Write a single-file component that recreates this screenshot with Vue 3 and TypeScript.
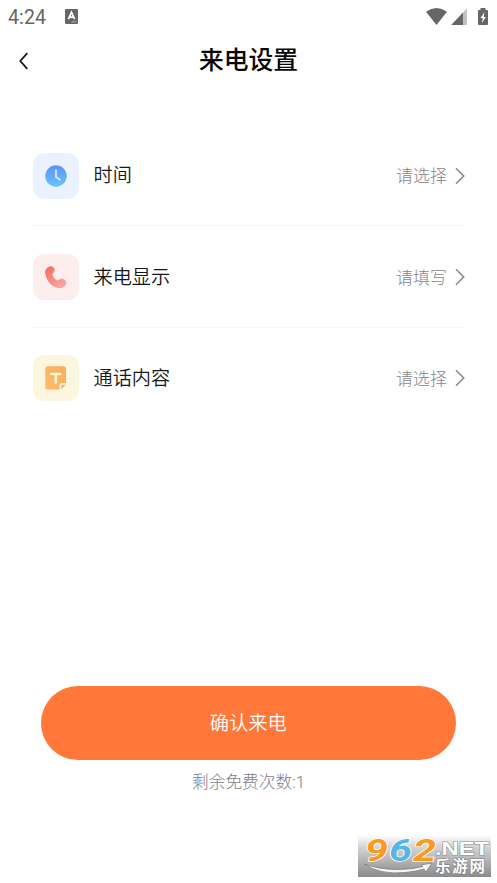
<script setup lang="ts">
type IconName = 'clock' | 'phone' | 'text'

interface SettingRow {
  icon: IconName
  label: string
  hint: string
}

const rows: SettingRow[] = [
  { icon: 'clock', label: '时间', hint: '请选择' },
  { icon: 'phone', label: '来电显示', hint: '请填写' },
  { icon: 'text', label: '通话内容', hint: '请选择' },
]
const remaining = 1
</script>

<template>
  <main class="screen">
    <div class="status">
      <span class="time">4:24</span>
      <svg class="app-icon" width="13" height="15" viewBox="0 0 13 15">
        <rect width="13" height="15" rx="1.3" fill="#666" />
        <path d="M3.4 10.2 6.5 3.4l3.1 6.8M4.5 8.2h4" fill="none" stroke="#fff" stroke-width="1.7" />
        <path d="M6.5 12.8h5" stroke="#aaa" stroke-width="1.2" />
      </svg>
      <svg class="signals" width="64" height="20" viewBox="0 0 64 20">
        <path d="M0 3.8Q10.5-3.6 21 3.8L10.5 17Z" fill="#666" />
        <path d="M37 4.2 41 .8V17h-4Z" fill="#c2c2c2" />
        <path d="M25.2 17 37 4.4V17Z" fill="#666" />
        <path d="M54.5 0h5v2H61q1 0 1 1v13q0 1-1 1h-8q-1 0-1-1V3q0-1 1-1h1.500Z" fill="#666" />
        <path d="m58.500 4-4 6h2.200l-.8 5 4-6h-2.200Z" fill="#fff" />
      </svg>
    </div>
    <header class="header">
      <svg class="back" width="10" height="18" viewBox="0 0 10 18">
        <path d="M8.300 1.200 1.300 9l7 7.800" fill="none" stroke="#1c1c1c" stroke-width="1.800" />
      </svg>
      <h1>来电设置</h1>
    </header>

    <section class="list">
      <div v-for="row in rows" :key="row.label" class="row">
        <div class="tile" :class="row.icon">
          <svg v-if="row.icon === 'clock'" width="22" height="22" viewBox="0 0 22 22">
            <defs>
              <linearGradient id="clockFill" x1="0" y1="0" x2="0" y2="1">
                <stop stop-color="#5b92f4" /><stop offset="1" stop-color="#67c4fb" />
              </linearGradient>
            </defs>
            <circle cx="11" cy="11" r="10.700" fill="url(#clockFill)" />
            <path d="M11 5v7l4 2.800" fill="none" stroke="#dcecff" stroke-width="1.700" stroke-linecap="round" stroke-linejoin="round" />
          </svg>
          <svg v-else-if="row.icon === 'phone'" width="22" height="23" viewBox="0 0 22 23">
            <defs>
              <linearGradient id="phoneFill" x1="0" y1="0" x2=".7" y2="1">
                <stop stop-color="#f5685f" /><stop offset="1" stop-color="#f9a6a1" />
              </linearGradient>
            </defs>
            <path d="M1.800 2.200Q5.500-1.500 8.600 1.600 10.200 3.500 9.300 5.300L7.800 7.900Q7.200 9 8 10.200 9.300 12.700 11.800 14.200 12.900 14.800 13.700 14L15.300 12.900Q16.800 12.200 18.200 13L20.300 14.500Q22.200 16.300 20.800 18.800 18.500 22.500 14.500 22.200 7.300 21.600 2.900 14.700 0 10.200.1 6 .2 3.800 1.800 2.200Z" fill="url(#phoneFill)" />
          </svg>
          <svg v-else width="22" height="24" viewBox="0 0 22 24">
            <defs>
              <linearGradient id="noteFill" x1="1" y1="0" x2="0" y2="1">
                <stop stop-color="#faae58" /><stop offset="1" stop-color="#fbbd6b" />
              </linearGradient>
            </defs>
            <path d="M2.500.3h16.300q2.200 0 2.200 2.200V17h-4.500q-2 0-2 2v4.500h-12Q.3 23.500.3 21.300V2.500Q.3.300 2.500.3Z" fill="url(#noteFill)" />
            <path d="M16.300 23.200v-3.200q0-1.200 1.200-1.200H21Z" fill="#fbb761" />
            <path d="M6.300 8h9M10.800 8v8.500" fill="none" stroke="#fff3dc" stroke-width="2.600" stroke-linecap="round" />
          </svg>
        </div>
        <span class="label">{{ row.label }}</span>
        <span class="hint">{{ row.hint }}</span>
        <svg class="chevron" width="10" height="18" viewBox="0 0 10 18">
          <path d="M1 1.200 8.700 9 1 16.800" fill="none" stroke="#8b8b90" stroke-width="1.600" />
        </svg>
      </div>
    </section>

    <button class="confirm" type="button">确认来电</button>
    <p class="remaining">剩余免费次数:{{ remaining }}</p>

    <svg class="brand" width="133" height="42" viewBox="0 0 133 42">
      <defs>
        <linearGradient id="brandFade" x1="0" y1="0" x2="0" y2="1">
          <stop stop-color="#fff" /><stop offset=".25" stop-color="#d8d8d8" /><stop offset="1" stop-color="#8b8b8b" />
        </linearGradient>
      </defs>
      <rect width="133" height="42" fill="url(#brandFade)" />
      <g class="digits" stroke-linejoin="round">
        <text x="7" y="26" textLength="23" lengthAdjust="spacingAndGlyphs" fill="#fb9a20">9</text>
        <text x="31" y="26" textLength="23" lengthAdjust="spacingAndGlyphs" fill="#59b3e4">6</text>
        <text x="55" y="26" textLength="23" lengthAdjust="spacingAndGlyphs" fill="#fb9a20">2</text>
      </g>
      <text class="domain" x="77" y="19.500" textLength="54" lengthAdjust="spacingAndGlyphs">.NET</text>
      <path d="M6 29Q22 40 47 37.500 59 36.300 66 34l2 3 6-9-11 2 2 1.500Q54 34.500 40 34.500 21 34.500 6 29Z" fill="#f5f5f5" stroke="#777" stroke-width=".7" />
      <text class="site" x="77" y="37" textLength="50">乐游网</text>
    </svg>
  </main>
</template>

<style>
body {
  background: #fff;
}
</style>

<style scoped>
.screen {
  position: relative;
  box-sizing: border-box;
  width: 497px;
  height: 883px;
  overflow: hidden;
  background: #fff;
  font-family: Roboto, "Noto Sans CJK SC", sans-serif;
}
.status {
  box-sizing: border-box;
  display: flex;
  align-items: flex-start;
  height: 34px;
  padding: 8px 7px 0 8px;
  color: #666;
}
.time {
  width: 57px;
  font-size: 19.5px;
  line-height: 20px;
  letter-spacing: 0.1px;
}
.app-icon {
  margin-top: 1px;
}
.signals {
  margin-left: auto;
}
.header {
  display: grid;
  grid-template-columns: 60px 1fr 60px;
  align-items: center;
  height: 52px;
}
.back {
  margin: 2px 0 0 18.5px;
}
h1 {
  margin: 0;
  padding-top: 2px;
  font-size: 24.8px;
  line-height: 36px;
  font-weight: 500;
  text-align: center;
  color: #080808;
}
.list {
  padding: 39px 32px 0 32.5px;
}
.row {
  box-sizing: border-box;
  display: flex;
  align-items: center;
  height: 101.4px;
  border-bottom: 1px solid #f7f7f7;
}
.row:last-child {
  border-bottom-color: transparent;
}
.tile {
  display: flex;
  align-items: center;
  justify-content: center;
  width: 46px;
  height: 46px;
  margin-top: 1px;
  border-radius: 11px;
}
.clock {
  background: #eaf2ff;
}
.phone {
  background: #fdeeee;
}
.text {
  background: #fcf6df;
}
.label {
  margin-left: 15px;
  padding-top: 2px;
  font-size: 19.2px;
  line-height: 28px;
  font-weight: 350;
  color: #171717;
}
.hint {
  margin-left: auto;
  padding-top: 2px;
  font-size: 17px;
  line-height: 26px;
  font-weight: 300;
  color: #858587;
}
.chevron {
  margin: 1px 0 0 8px;
}
.confirm {
  display: block;
  width: 414.5px;
  height: 74px;
  margin: 256.800px 0 0 41px;
  padding: 2px 0 0;
  border: 0;
  border-radius: 37px;
  background: #ff7839;
  color: #fff;
  font: 350 19.3px/28px Roboto, "Noto Sans CJK SC", sans-serif;
}
.remaining {
  margin: 10px 0 0;
  font-size: 16.7px;
  line-height: 26px;
  text-align: center;
  font-weight: 300;
  color: #7e7e8b;
}
.brand {
  position: absolute;
  right: 6px;
  bottom: 6px;
  overflow: visible;
}
.digits {
  font: italic 700 32px Roboto, sans-serif;
  stroke: #fff;
  stroke-width: 1.5px;
  paint-order: stroke;
}
.domain {
  font: 700 19px "Liberation Sans", sans-serif;
  fill: #fff;
  stroke: #8a8a8a;
  stroke-width: 1px;
  paint-order: stroke;
}
.site {
  font: 700 15.500px "Noto Sans CJK SC", sans-serif;
  fill: #fff;
  stroke: #777;
  stroke-width: 1px;
  paint-order: stroke;
}
</style>
